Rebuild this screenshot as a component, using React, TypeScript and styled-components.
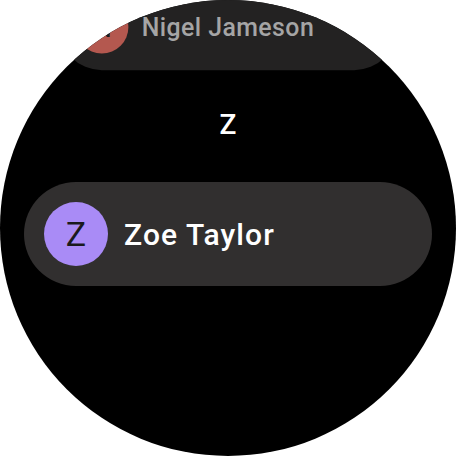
import React from 'react';
import styled, { createGlobalStyle } from 'styled-components';

const GlobalStyle = createGlobalStyle`
  html, body {
    margin: 0;
    padding: 0;
    background: #ffffff;
  }
  body {
    font-family: Roboto, 'Noto Sans', 'Liberation Sans', sans-serif;
  }
`;

type Contact = {
  name: string;
  color: string;
  faded?: boolean;
};

const Screen = styled.div`
  width: 456px;
  height: 456px;
  border-radius: 50%;
  overflow: hidden;
  background: #000000;
`;

const List = styled.div`
  display: flex;
  flex-direction: column;
  gap: 8px;
  margin-top: -25px;
`;

// rows near the top edge shrink and dim, like a curved scrolling list
const Chip = styled.div<{ $faded?: boolean }>`
  display: flex;
  align-items: center;
  gap: 16px;
  height: 104px;
  margin: 0 24px;
  padding-left: 20px;
  border-radius: 52px;
  background: ${(p) => (p.$faded ? '#232222' : '#312f2f')};
  transform: ${(p) => (p.$faded ? 'scale(0.83)' : 'none')};
  flex-shrink: 0;
`;

const Avatar = styled.div<{ $color: string }>`
  display: flex;
  align-items: center;
  justify-content: center;
  width: 64px;
  height: 64px;
  border-radius: 50%;
  background: ${(p) => p.$color};
  color: #1a1a1c;
  font-size: 34px;
  font-weight: 400;
  flex-shrink: 0;
`;

const Label = styled.div<{ $faded?: boolean }>`
  color: ${(p) => (p.$faded ? '#a5a5a5' : '#ffffff')};
  font-size: 30px;
  font-weight: 500;
  letter-spacing: ${(p) => (p.$faded ? '0.5px' : '1.1px')};
  white-space: nowrap;
`;

const Header = styled.div`
  display: flex;
  align-items: center;
  justify-content: center;
  height: 87px;
  padding-bottom: 13px;
  box-sizing: border-box;
  color: #ffffff;
  font-size: 28px;
  font-weight: 500;
`;

const ContactChip = ({ name, color, faded }: Contact) => (
  <Chip $faded={faded}>
    <Avatar $color={color}>{name.charAt(0)}</Avatar>
    <Label $faded={faded}>{name}</Label>
  </Chip>
);

const App = () => {
  return (
    <>
      <GlobalStyle />
      <Screen>
        <List>
          <ContactChip name="Nigel Jameson" color="#b4584f" faded />
          <Header>Z</Header>
          <ContactChip name="Zoe Taylor" color="#a98bf6" />
        </List>
      </Screen>
    </>
  );
};

export default App;
